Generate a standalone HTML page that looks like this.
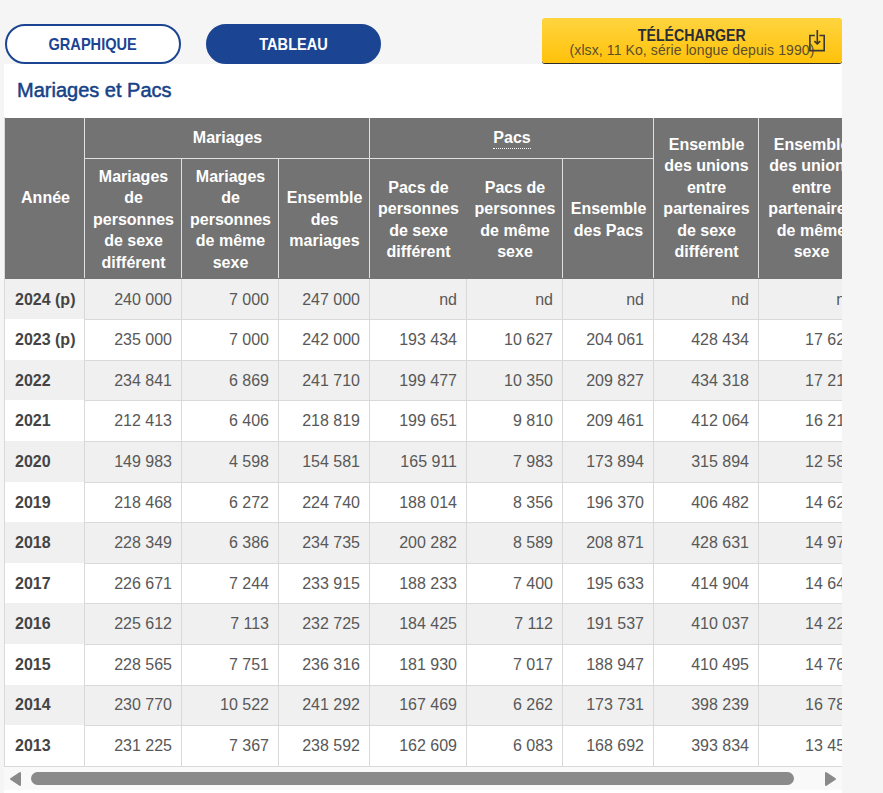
<!DOCTYPE html>
<html><head><meta charset="utf-8"><title>Mariages et Pacs</title>
<style>
*{box-sizing:border-box;margin:0;padding:0}
html,body{width:883px;height:793px;overflow:hidden;background:#f5f5f5;font-family:"Liberation Sans",sans-serif}
.btn{position:absolute;top:24px;height:40px;border-radius:20px;border:2px solid #1b4592;font-weight:bold;font-size:16.4px;text-align:center;line-height:37px}
.btn span{display:inline-block;transform:scaleX(0.89)}
.dl .a span{display:inline-block;transform:scaleX(0.86)}
.g{left:5px;width:176px;background:#fff;color:#1b4592}
.t{left:206px;width:175px;background:#1b4592;color:#fff}
.dl{position:absolute;left:542px;top:18px;width:300px;height:45px;border-radius:3px;background:linear-gradient(#ffd43f,#ffc20a);box-shadow:0 1px 0 #2e2e2e;}
.dl .a{position:absolute;left:0;width:300px;top:7.5px;text-align:center;font-weight:bold;font-size:16.5px;color:#2b2d36;line-height:18px}
.dl .b{position:absolute;left:0;width:300px;top:23px;text-align:center;font-size:14px;letter-spacing:0.1px;color:#5a4e2e;line-height:18px}
.panel{position:absolute;left:4px;top:64px;width:838px;height:729px;background:#fff}
.title{position:absolute;left:17px;top:78px;font-size:20px;color:#164288;-webkit-text-stroke:0.5px #164288;white-space:nowrap;line-height:24px}
.tw{position:absolute;left:4px;top:117px;width:838px;height:650px;overflow:hidden;border-left:1px solid #e6e6e6;border-top:1px solid #e6e6e6}
.hd{position:absolute;background:#737373;color:#fff;font-weight:bold;font-size:16px;text-align:center;line-height:21.5px}
.ln{position:absolute;background:#d9d9d9}
.hl{position:absolute;background:#e0e0e0}
.c{position:absolute;font-size:16px;color:#585858;text-align:right;white-space:nowrap;line-height:20px}
.y{position:absolute;font-size:16px;color:#444;font-weight:bold;white-space:nowrap;line-height:20px}
.rg{position:absolute;background:#f0f0f0}
.track{position:absolute;left:4px;top:767px;width:838px;height:23px;background:#f9f9f9}
.thumb{position:absolute;left:31px;top:772px;width:763px;height:13px;border-radius:6.5px;background:#8a8a8a}
</style></head><body>
<div class="panel"></div>
<div class="btn g"><span>GRAPHIQUE</span></div>
<div class="btn t"><span>TABLEAU</span></div>
<div class="dl"><div class="a"><span>TÉLÉCHARGER</span></div><div class="b">(xlsx, 11 Ko, série longue depuis 1990)</div>
<svg style="position:absolute;left:262px;top:10px" width="22" height="26" viewBox="0 0 22 26">
<path d="M10.9 7.5 H5.9 V22.6 H20.2 V7.5 H15.4" fill="none" stroke="#3a3830" stroke-width="1.6"/>
<path d="M13.3 2 V15" fill="none" stroke="#3a3830" stroke-width="1.6"/>
<path d="M10.4 13.1 L13.3 15.9 L16.2 13.1" fill="none" stroke="#3a3830" stroke-width="1.6"/>
</svg></div>
<div class="title">Mariages et Pacs</div>

<div style="position:absolute;left:0;top:0;width:842px;height:767px;overflow:hidden">
<div class="rg" style="left:5px;top:279px;width:860px;height:40px"></div>
<div class="rg" style="left:5px;top:360px;width:860px;height:40px"></div>
<div class="rg" style="left:5px;top:441px;width:860px;height:41px"></div>
<div class="rg" style="left:5px;top:522px;width:860px;height:41px"></div>
<div class="rg" style="left:5px;top:603px;width:860px;height:41px"></div>
<div class="rg" style="left:5px;top:685px;width:860px;height:40px"></div>
<div class="hd" style="left:5px;top:118px;width:860px;height:161px"></div>
<div class="hd" style="background:none;left:6px;width:79px;top:187.25px;height:21.5px">Année</div>
<div class="hd" style="background:none;left:85px;width:285px;top:126.75px;height:21.5px">Mariages</div>
<div class="hd" style="background:none;left:370px;width:284px;top:126.75px;height:21.5px"><span style="border-bottom:1px dotted #fff;padding-bottom:2px">Pacs</span></div>
<div class="hd" style="background:none;left:85px;width:97px;top:165.75px;height:107.5px">Mariages<br>de<br>personnes<br>de sexe<br>différent</div>
<div class="hd" style="background:none;left:182px;width:97px;top:165.75px;height:107.5px">Mariages<br>de<br>personnes<br>de même<br>sexe</div>
<div class="hd" style="background:none;left:279px;width:91px;top:187.25px;height:64.5px">Ensemble<br>des<br>mariages</div>
<div class="hd" style="background:none;left:370px;width:97px;top:176.50px;height:86.0px">Pacs de<br>personnes<br>de sexe<br>différent</div>
<div class="hd" style="background:none;left:467px;width:96px;top:176.50px;height:86.0px">Pacs de<br>personnes<br>de même<br>sexe</div>
<div class="hd" style="background:none;left:563px;width:91px;top:198.00px;height:43.0px">Ensemble<br>des Pacs</div>
<div class="hd" style="background:none;left:654px;width:105px;top:133.50px;height:129.0px">Ensemble<br>des unions<br>entre<br>partenaires<br>de sexe<br>différent</div>
<div class="hd" style="background:none;left:759px;width:105px;top:133.50px;height:129.0px">Ensemble<br>des unions<br>entre<br>partenaires<br>de même<br>sexe</div>
<div class="hl" style="left:84px;top:158px;width:569px;height:1px"></div>
<div class="hl" style="left:84px;top:118px;width:1px;height:160px"></div>
<div class="hl" style="left:369px;top:118px;width:1px;height:160px"></div>
<div class="hl" style="left:653px;top:118px;width:1px;height:160px"></div>
<div class="hl" style="left:758px;top:118px;width:1px;height:160px"></div>
<div class="hl" style="left:181px;top:158px;width:1px;height:120px"></div>
<div class="hl" style="left:278px;top:158px;width:1px;height:120px"></div>
<div class="hl" style="left:562px;top:158px;width:1px;height:120px"></div>
<div class="ln" style="left:84px;top:319px;width:776px;height:1px"></div>
<div class="ln" style="left:84px;top:360px;width:776px;height:1px"></div>
<div class="ln" style="left:84px;top:400px;width:776px;height:1px"></div>
<div class="ln" style="left:84px;top:441px;width:776px;height:1px"></div>
<div class="ln" style="left:84px;top:482px;width:776px;height:1px"></div>
<div class="ln" style="left:84px;top:522px;width:776px;height:1px"></div>
<div class="ln" style="left:84px;top:563px;width:776px;height:1px"></div>
<div class="ln" style="left:84px;top:603px;width:776px;height:1px"></div>
<div class="ln" style="left:84px;top:644px;width:776px;height:1px"></div>
<div class="ln" style="left:84px;top:685px;width:776px;height:1px"></div>
<div class="ln" style="left:84px;top:725px;width:776px;height:1px"></div>
<div class="ln" style="left:4px;top:766px;width:856px;height:1px"></div>
<div class="ln" style="left:84px;top:279px;width:1px;height:488px"></div>
<div class="ln" style="left:181px;top:279px;width:1px;height:488px"></div>
<div class="ln" style="left:278px;top:279px;width:1px;height:488px"></div>
<div class="ln" style="left:369px;top:279px;width:1px;height:488px"></div>
<div class="ln" style="left:466px;top:279px;width:1px;height:488px"></div>
<div class="ln" style="left:562px;top:279px;width:1px;height:488px"></div>
<div class="ln" style="left:653px;top:279px;width:1px;height:488px"></div>
<div class="ln" style="left:758px;top:279px;width:1px;height:488px"></div>
<div class="ln" style="left:4px;top:117px;width:1px;height:650px"></div>
<div class="y" style="left:15px;top:289.60px">2024 (p)</div>
<div class="c" style="left:32px;width:140px;top:289.60px">240 000</div>
<div class="c" style="left:129px;width:140px;top:289.60px">7 000</div>
<div class="c" style="left:220px;width:140px;top:289.60px">247 000</div>
<div class="c" style="left:317px;width:140px;top:289.60px">nd</div>
<div class="c" style="left:413px;width:140px;top:289.60px">nd</div>
<div class="c" style="left:504px;width:140px;top:289.60px">nd</div>
<div class="c" style="left:609px;width:140px;top:289.60px">nd</div>
<div class="c" style="left:714px;width:140px;top:289.60px">nd</div>
<div class="y" style="left:15px;top:330.18px">2023 (p)</div>
<div class="c" style="left:32px;width:140px;top:330.18px">235 000</div>
<div class="c" style="left:129px;width:140px;top:330.18px">7 000</div>
<div class="c" style="left:220px;width:140px;top:330.18px">242 000</div>
<div class="c" style="left:317px;width:140px;top:330.18px">193 434</div>
<div class="c" style="left:413px;width:140px;top:330.18px">10 627</div>
<div class="c" style="left:504px;width:140px;top:330.18px">204 061</div>
<div class="c" style="left:609px;width:140px;top:330.18px">428 434</div>
<div class="c" style="left:714px;width:140px;top:330.18px">17 627</div>
<div class="y" style="left:15px;top:370.76px">2022</div>
<div class="c" style="left:32px;width:140px;top:370.76px">234 841</div>
<div class="c" style="left:129px;width:140px;top:370.76px">6 869</div>
<div class="c" style="left:220px;width:140px;top:370.76px">241 710</div>
<div class="c" style="left:317px;width:140px;top:370.76px">199 477</div>
<div class="c" style="left:413px;width:140px;top:370.76px">10 350</div>
<div class="c" style="left:504px;width:140px;top:370.76px">209 827</div>
<div class="c" style="left:609px;width:140px;top:370.76px">434 318</div>
<div class="c" style="left:714px;width:140px;top:370.76px">17 219</div>
<div class="y" style="left:15px;top:411.34px">2021</div>
<div class="c" style="left:32px;width:140px;top:411.34px">212 413</div>
<div class="c" style="left:129px;width:140px;top:411.34px">6 406</div>
<div class="c" style="left:220px;width:140px;top:411.34px">218 819</div>
<div class="c" style="left:317px;width:140px;top:411.34px">199 651</div>
<div class="c" style="left:413px;width:140px;top:411.34px">9 810</div>
<div class="c" style="left:504px;width:140px;top:411.34px">209 461</div>
<div class="c" style="left:609px;width:140px;top:411.34px">412 064</div>
<div class="c" style="left:714px;width:140px;top:411.34px">16 216</div>
<div class="y" style="left:15px;top:451.92px">2020</div>
<div class="c" style="left:32px;width:140px;top:451.92px">149 983</div>
<div class="c" style="left:129px;width:140px;top:451.92px">4 598</div>
<div class="c" style="left:220px;width:140px;top:451.92px">154 581</div>
<div class="c" style="left:317px;width:140px;top:451.92px">165 911</div>
<div class="c" style="left:413px;width:140px;top:451.92px">7 983</div>
<div class="c" style="left:504px;width:140px;top:451.92px">173 894</div>
<div class="c" style="left:609px;width:140px;top:451.92px">315 894</div>
<div class="c" style="left:714px;width:140px;top:451.92px">12 581</div>
<div class="y" style="left:15px;top:492.50px">2019</div>
<div class="c" style="left:32px;width:140px;top:492.50px">218 468</div>
<div class="c" style="left:129px;width:140px;top:492.50px">6 272</div>
<div class="c" style="left:220px;width:140px;top:492.50px">224 740</div>
<div class="c" style="left:317px;width:140px;top:492.50px">188 014</div>
<div class="c" style="left:413px;width:140px;top:492.50px">8 356</div>
<div class="c" style="left:504px;width:140px;top:492.50px">196 370</div>
<div class="c" style="left:609px;width:140px;top:492.50px">406 482</div>
<div class="c" style="left:714px;width:140px;top:492.50px">14 628</div>
<div class="y" style="left:15px;top:533.08px">2018</div>
<div class="c" style="left:32px;width:140px;top:533.08px">228 349</div>
<div class="c" style="left:129px;width:140px;top:533.08px">6 386</div>
<div class="c" style="left:220px;width:140px;top:533.08px">234 735</div>
<div class="c" style="left:317px;width:140px;top:533.08px">200 282</div>
<div class="c" style="left:413px;width:140px;top:533.08px">8 589</div>
<div class="c" style="left:504px;width:140px;top:533.08px">208 871</div>
<div class="c" style="left:609px;width:140px;top:533.08px">428 631</div>
<div class="c" style="left:714px;width:140px;top:533.08px">14 975</div>
<div class="y" style="left:15px;top:573.66px">2017</div>
<div class="c" style="left:32px;width:140px;top:573.66px">226 671</div>
<div class="c" style="left:129px;width:140px;top:573.66px">7 244</div>
<div class="c" style="left:220px;width:140px;top:573.66px">233 915</div>
<div class="c" style="left:317px;width:140px;top:573.66px">188 233</div>
<div class="c" style="left:413px;width:140px;top:573.66px">7 400</div>
<div class="c" style="left:504px;width:140px;top:573.66px">195 633</div>
<div class="c" style="left:609px;width:140px;top:573.66px">414 904</div>
<div class="c" style="left:714px;width:140px;top:573.66px">14 644</div>
<div class="y" style="left:15px;top:614.24px">2016</div>
<div class="c" style="left:32px;width:140px;top:614.24px">225 612</div>
<div class="c" style="left:129px;width:140px;top:614.24px">7 113</div>
<div class="c" style="left:220px;width:140px;top:614.24px">232 725</div>
<div class="c" style="left:317px;width:140px;top:614.24px">184 425</div>
<div class="c" style="left:413px;width:140px;top:614.24px">7 112</div>
<div class="c" style="left:504px;width:140px;top:614.24px">191 537</div>
<div class="c" style="left:609px;width:140px;top:614.24px">410 037</div>
<div class="c" style="left:714px;width:140px;top:614.24px">14 225</div>
<div class="y" style="left:15px;top:654.82px">2015</div>
<div class="c" style="left:32px;width:140px;top:654.82px">228 565</div>
<div class="c" style="left:129px;width:140px;top:654.82px">7 751</div>
<div class="c" style="left:220px;width:140px;top:654.82px">236 316</div>
<div class="c" style="left:317px;width:140px;top:654.82px">181 930</div>
<div class="c" style="left:413px;width:140px;top:654.82px">7 017</div>
<div class="c" style="left:504px;width:140px;top:654.82px">188 947</div>
<div class="c" style="left:609px;width:140px;top:654.82px">410 495</div>
<div class="c" style="left:714px;width:140px;top:654.82px">14 768</div>
<div class="y" style="left:15px;top:695.40px">2014</div>
<div class="c" style="left:32px;width:140px;top:695.40px">230 770</div>
<div class="c" style="left:129px;width:140px;top:695.40px">10 522</div>
<div class="c" style="left:220px;width:140px;top:695.40px">241 292</div>
<div class="c" style="left:317px;width:140px;top:695.40px">167 469</div>
<div class="c" style="left:413px;width:140px;top:695.40px">6 262</div>
<div class="c" style="left:504px;width:140px;top:695.40px">173 731</div>
<div class="c" style="left:609px;width:140px;top:695.40px">398 239</div>
<div class="c" style="left:714px;width:140px;top:695.40px">16 784</div>
<div class="y" style="left:15px;top:735.98px">2013</div>
<div class="c" style="left:32px;width:140px;top:735.98px">231 225</div>
<div class="c" style="left:129px;width:140px;top:735.98px">7 367</div>
<div class="c" style="left:220px;width:140px;top:735.98px">238 592</div>
<div class="c" style="left:317px;width:140px;top:735.98px">162 609</div>
<div class="c" style="left:413px;width:140px;top:735.98px">6 083</div>
<div class="c" style="left:504px;width:140px;top:735.98px">168 692</div>
<div class="c" style="left:609px;width:140px;top:735.98px">393 834</div>
<div class="c" style="left:714px;width:140px;top:735.98px">13 450</div>
</div>
<div class="track"></div>
<svg style="position:absolute;left:9px;top:771px" width="14" height="16" viewBox="0 0 14 16"><path d="M2 8 L11 2 V14 Z" fill="#8a8a8a" stroke="#8a8a8a" stroke-width="2" stroke-linejoin="round"/></svg>
<div class="thumb"></div>
<svg style="position:absolute;left:823px;top:771px" width="14" height="16" viewBox="0 0 14 16"><path d="M12 8 L3 2 V14 Z" fill="#8a8a8a" stroke="#8a8a8a" stroke-width="2" stroke-linejoin="round"/></svg>
</body></html>
